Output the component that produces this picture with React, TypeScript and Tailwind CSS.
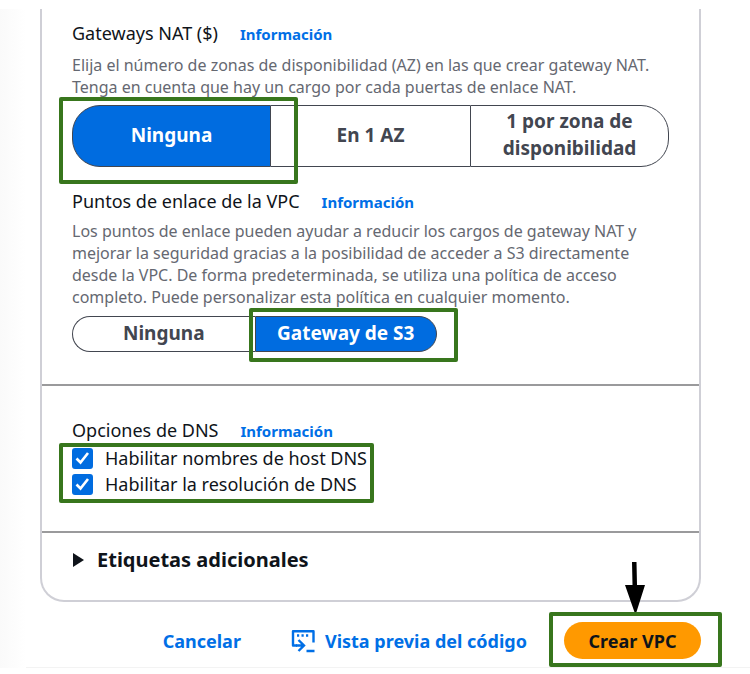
import { useState } from "react";
import type { ReactNode } from "react";

function Highlight({ className }: { className: string }) {
  return (
    <span
      aria-hidden="true"
      className={`pointer-events-none absolute z-10 rounded-xs border-4 border-[#38761d] ${className}`}
    />
  );
}

function Heading({ children }: { children: ReactNode }) {
  return (
    <div className="flex items-baseline gap-[22px] whitespace-nowrap leading-6">
      <h2 className="text-[18px] text-[#0f141a]">{children}</h2>
      <a href="#info" className="text-[15px] font-bold text-[#006fe6]">
        Información
      </a>
    </div>
  );
}

function Segment({
  selected,
  onSelect,
  className,
  children,
}: {
  selected: boolean;
  onSelect: () => void;
  className: string;
  children: ReactNode;
}) {
  return (
    <button
      type="button"
      aria-pressed={selected}
      onClick={onSelect}
      className={`border border-[#424650] pb-[2px] text-center text-[19px] font-bold leading-[27px] ${
        selected ? "bg-[#006ce0] text-white" : "bg-white text-[#424650]"
      } ${className}`}
    >
      {children}
    </button>
  );
}

function Option({ id, label }: { id: string; label: string }) {
  return (
    <div className="flex h-[26px] items-center gap-3">
      <span className="grid">
        <input
          id={id}
          type="checkbox"
          defaultChecked
          className="peer col-start-1 row-start-1 size-[21px] appearance-none rounded-[3px] border-2 border-[#8c8c94] bg-white checked:border-[#006ce0] checked:bg-[#006ce0]"
        />
        <svg
          viewBox="0 0 21 21"
          className="pointer-events-none col-start-1 row-start-1 hidden size-[21px] peer-checked:block"
          fill="none"
          stroke="white"
          strokeWidth="2.6"
        >
          <path d="M4.5 10.500l4 4 7.500-9.500" />
        </svg>
      </span>
      <label htmlFor={id} className="whitespace-nowrap text-[18px] text-[#0f141a]">
        {label}
      </label>
    </div>
  );
}

export default function App() {
  const [nat, setNat] = useState(0);
  const [endpoint, setEndpoint] = useState(1);
  const [open, setOpen] = useState(false);

  return (
    <div className="flex bg-white pt-[9px] font-['Noto_Sans',sans-serif]">
      <div className="w-[26px] shrink-0 bg-linear-to-r from-[#fafafa] to-white" />
      <div className="min-w-0 flex-1 border-b border-[#f3f3f3] pr-[49px] pl-[14px]">
        <main className="rounded-b-3xl border-2 border-t-0 border-[#cfcfd6]">
          <section className="border-b-2 border-[#9a9a9c] px-[30px] pt-3 pb-8">
            <Heading>Gateways NAT ($)</Heading>
            <p className="mt-2 whitespace-nowrap text-[16px] leading-[22px] text-[#656871]">
              Elija el número de zonas de disponibilidad (AZ) en las que crear gateway NAT.
              <br />
              Tenga en cuenta que hay un cargo por cada puertas de enlace NAT.
            </p>
            <div className="mt-[7px] grid h-[62px] max-w-[597px] grid-cols-3">
              <div className="relative grid">
                <Segment selected={nat === 0} onSelect={() => setNat(0)} className="rounded-l-[28px]">
                  Ninguna
                </Segment>
                <Highlight className="-top-2 -right-[27px] -bottom-[17px] -left-[13px]" />
              </div>
              <Segment selected={nat === 1} onSelect={() => setNat(1)} className="border-x-0">
                En 1 AZ
              </Segment>
              <Segment selected={nat === 2} onSelect={() => setNat(2)} className="rounded-r-[28px] px-6">
                1 por zona de disponibilidad
              </Segment>
            </div>

            <div className="mt-[22px]">
              <Heading>Puntos de enlace de la VPC</Heading>
            </div>
            <p className="mt-[6px] whitespace-nowrap text-[16px] leading-[22px] text-[#656871]">
              Los puntos de enlace pueden ayudar a reducir los cargos de gateway NAT y
              <br />
              mejorar la seguridad gracias a la posibilidad de acceder a S3 directamente
              <br />
              desde la VPC. De forma predeterminada, se utiliza una política de acceso
              <br />
              completo. Puede personalizar esta política en cualquier momento.
            </p>
            <div className="mt-2 grid h-9 max-w-[365px] grid-cols-2">
              <Segment selected={endpoint === 0} onSelect={() => setEndpoint(0)} className="rounded-l-full border-r-0">
                Ninguna
              </Segment>
              <div className="relative grid">
                <Segment selected={endpoint === 1} onSelect={() => setEndpoint(1)} className="rounded-r-full">
                  Gateway de S3
                </Segment>
                <Highlight className="-top-2 -right-[21px] -bottom-[10px] -left-[6px]" />
              </div>
            </div>
          </section>

          <section className="border-b-2 border-[#9a9a9c] px-[30px] pt-8 pb-[34px]">
            <Heading>Opciones de DNS</Heading>
            <div className="relative mt-[2px] w-[302px]">
              <Option id="dns-host" label="Habilitar nombres de host DNS" />
              <Option id="dns-resolution" label="Habilitar la resolución de DNS" />
              <Highlight className="-top-[2px] -right-0 -bottom-[6px] -left-[13px]" />
            </div>
          </section>

          <section className="px-[30px] pt-[15px] pb-7">
            <button
              type="button"
              aria-expanded={open}
              onClick={() => setOpen(!open)}
              className="flex items-center gap-3 text-[20px] font-bold leading-6 text-[#0f141a]"
            >
              <svg viewBox="0 0 13 14" className="h-[14px] w-[13px]" fill="currentColor">
                <path d="M1 0l11 7-11 7z" />
              </svg>
              Etiquetas adicionales
            </button>
          </section>
        </main>

        <footer className="flex items-center justify-end pt-5 pb-2 text-[18px] font-bold leading-6 text-[#006fe6]">
          <button type="button" className="mr-[50px]">
            Cancelar
          </button>
          <button type="button" className="mr-[37px] flex items-center gap-[10px] whitespace-nowrap">
            <svg viewBox="0 0 24 24" className="size-6" fill="none" stroke="currentColor" strokeWidth="2.4">
              <path d="M6 16.500H2V2.200h20.500v11.300" strokeLinejoin="round" />
              <path d="M6 6.500h2.200M10.500 6.500h2.200M15 6.500h2.200" />
              <path d="M5 16.500h7.500M7.500 11l5.500 5.500-5.500 5.500M15.500 22H23.500" />
            </svg>
            Vista previa del código
          </button>
          <div className="relative">
            <button type="button" className="h-[37px] w-[137px] rounded-full bg-[#ff9900] text-[#0f141a]">
              Crear VPC
            </button>
            <Highlight className="-top-[10px] -right-[21px] -bottom-2 -left-[15px]" />
            <svg
              aria-hidden="true"
              viewBox="0 0 22 53"
              className="pointer-events-none absolute -top-[60px] right-[55px] h-[53px] w-[22px]"
            >
              <path d="M8 0h4.500l.5 23h8L11.500 53 1 23h7.500z" />
            </svg>
          </div>
        </footer>
      </div>
    </div>
  );
}
